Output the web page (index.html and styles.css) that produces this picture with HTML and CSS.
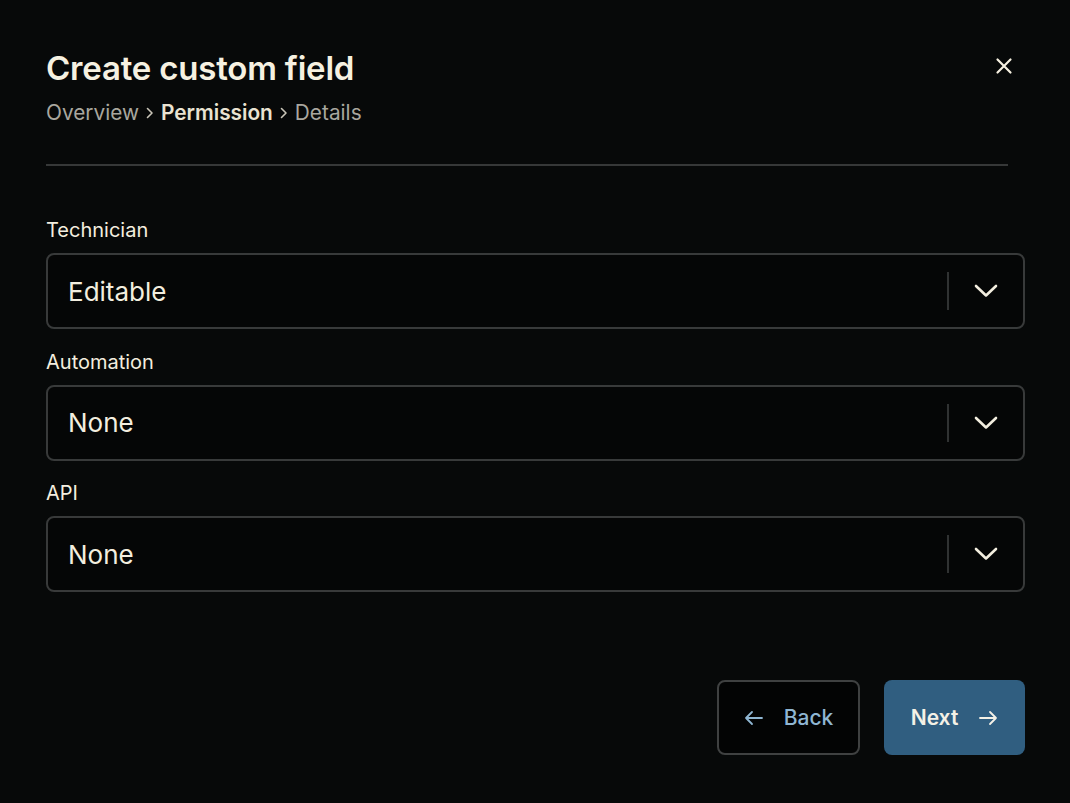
FILE: index.html
```html
<!DOCTYPE html>
<html>
<head>
<meta charset="utf-8">
<link rel="stylesheet" href="styles.css">
</head>
<body>
<div class="dialog">
  <div class="header">
    <div class="head-text">
      <h1 class="title">Create custom field</h1>
      <div class="crumbs">
        <span>Overview</span>
        <svg class="crumb-sep" width="10" height="14" viewBox="0 0 10 14"><path d="M2.5 2.5 L7 7 L2.5 11.5" fill="none" stroke="currentColor" stroke-width="1.6" stroke-linecap="round" stroke-linejoin="round"/></svg>
        <span class="current">Permission</span>
        <svg class="crumb-sep" width="10" height="14" viewBox="0 0 10 14"><path d="M2.5 2.5 L7 7 L2.5 11.5" fill="none" stroke="currentColor" stroke-width="1.6" stroke-linecap="round" stroke-linejoin="round"/></svg>
        <span>Details</span>
      </div>
    </div>
    <button class="close" aria-label="Close">
      <svg width="18" height="18" viewBox="0 0 18 18"><path d="M2.5 2.5 L15.5 15.5 M15.5 2.5 L2.5 15.5" stroke="currentColor" stroke-width="2.2" stroke-linecap="round"/></svg>
    </button>
  </div>
  <div class="divider"></div>

  <div class="fields">
    <div class="field">
      <label class="label">Technician</label>
      <div class="select">
        <span class="value">Editable</span>
        <span class="sep"></span>
        <svg class="chev" width="26" height="16" viewBox="0 0 26 16"><path d="M3 3 L13 12.5 L23 3" fill="none" stroke="currentColor" stroke-width="2.6" stroke-linecap="round" stroke-linejoin="round"/></svg>
      </div>
    </div>
    <div class="field">
      <label class="label">Automation</label>
      <div class="select">
        <span class="value">None</span>
        <span class="sep"></span>
        <svg class="chev" width="26" height="16" viewBox="0 0 26 16"><path d="M3 3 L13 12.5 L23 3" fill="none" stroke="currentColor" stroke-width="2.6" stroke-linecap="round" stroke-linejoin="round"/></svg>
      </div>
    </div>
    <div class="field">
      <label class="label">API</label>
      <div class="select">
        <span class="value">None</span>
        <span class="sep"></span>
        <svg class="chev" width="26" height="16" viewBox="0 0 26 16"><path d="M3 3 L13 12.5 L23 3" fill="none" stroke="currentColor" stroke-width="2.6" stroke-linecap="round" stroke-linejoin="round"/></svg>
      </div>
    </div>
  </div>

  <div class="actions">
    <button class="btn back">
      <svg width="20" height="16" viewBox="0 0 20 16"><path d="M18 8 H2 M8 2 L2 8 L8 14" fill="none" stroke="currentColor" stroke-width="1.8" stroke-linecap="round" stroke-linejoin="round"/></svg>
      <span>Back</span>
    </button>
    <button class="btn next">
      <span>Next</span>
      <svg width="20" height="16" viewBox="0 0 20 16"><path d="M2 8 H18 M12 2 L18 8 L12 14" fill="none" stroke="currentColor" stroke-width="1.8" stroke-linecap="round" stroke-linejoin="round"/></svg>
    </button>
  </div>
</div>
</body>
</html>
```

FILE: styles.css
```css
* { box-sizing: border-box; }
html, body {
  margin: 0;
  padding: 0;
  background: #070909;
  height: 100%;
}
body {
  font-family: Inter, "Noto Sans", sans-serif;
  color: #f3eedf;
}
.dialog {
  width: 1070px;
  height: 803px;
  padding: 46px 45px 0 46px;
  display: flex;
  flex-direction: column;
}
.header {
  display: flex;
  justify-content: space-between;
  align-items: flex-start;
  padding-right: 11px;
}
.title {
  margin: 0;
  font-size: 33px;
  font-weight: 600;
  line-height: 44px;
  color: #f6f1e1;
  letter-spacing: -0.2px;
}
.crumbs {
  display: flex;
  align-items: center;
  gap: 6px;
  margin-top: 10px;
  font-size: 20.8px;
  line-height: 26px;
  color: #a9a79f;
}
.crumbs .current {
  color: #e9e3d2;
  font-weight: 600;
}
.crumb-sep { color: #c9c5b8; }
.close {
  background: none;
  border: none;
  padding: 0;
  margin-top: 10px;
  color: #f6f1e1;
  width: 20px;
  height: 20px;
  display: flex;
  align-items: center;
  justify-content: center;
  cursor: pointer;
}
.divider {
  height: 2px;
  background: #363838;
  margin-top: 38px;
  margin-right: 17px;
}
.fields {
  margin-top: 52px;
  display: flex;
  flex-direction: column;
  gap: 20.5px;
}
.field {
  display: flex;
  flex-direction: column;
  gap: 10px;
}
.label {
  font-size: 20px;
  line-height: 25px;
  font-weight: 400;
  color: #f3eedf;
}
.select {
  height: 76px;
  border: 2px solid #383a3a;
  border-radius: 8px;
  background: #050606;
  display: flex;
  align-items: center;
  padding: 0 24px 0 20px;
}
.value {
  flex: 1;
  font-size: 26px;
  color: #f3eedf;
}
.sep {
  width: 2px;
  height: 38px;
  background: #303232;
  margin-right: 24px;
}
.chev { color: #f3eedf; }
.actions {
  margin-top: auto;
  margin-bottom: 48px;
  display: flex;
  justify-content: flex-end;
  gap: 24px;
}
.btn {
  height: 75px;
  border-radius: 8px;
  display: flex;
  align-items: center;
  justify-content: center;
  gap: 20px;
  font-family: Inter, "Noto Sans", sans-serif;
  font-size: 21px;
  cursor: pointer;
}
.btn.back {
  width: 143px;
  background: #030404;
  border: 2px solid #3f4141;
  color: #8fb6d2;
  font-weight: 500;
}
.btn.next {
  width: 141px;
  background: #305e80;
  border: none;
  color: #f4f1e6;
  font-weight: 600;
}
```
